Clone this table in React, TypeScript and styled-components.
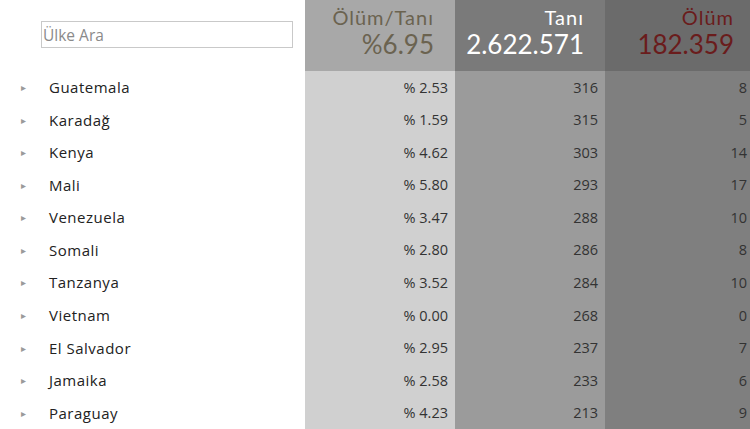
import styled, { createGlobalStyle } from 'styled-components';

const GlobalStyle = createGlobalStyle`
  html, body {
    margin: 0;
    padding: 0;
    background: #fff;
    overflow: hidden;
  }
  body {
    font-family: 'Open Sans', 'Liberation Sans', sans-serif;
  }
`;

type Tone = 'ratio' | 'cases' | 'deaths';

const headerBg: Record<Tone, string> = {
  ratio: '#a8a8a8',
  cases: '#7a7a7a',
  deaths: '#6b6b6b',
};

const bodyBg: Record<Tone, string> = {
  ratio: '#d0d0d0',
  cases: '#9b9b9b',
  deaths: '#7f7f7f',
};

const headerColor: Record<Tone, string> = {
  ratio: '#6b6350',
  cases: '#ffffff',
  deaths: '#6a1c1c',
};

const rows = [
  { name: 'Guatemala', ratio: '2.53', cases: 316, deaths: 8 },
  { name: 'Karadağ', ratio: '1.59', cases: 315, deaths: 5 },
  { name: 'Kenya', ratio: '4.62', cases: 303, deaths: 14 },
  { name: 'Mali', ratio: '5.80', cases: 293, deaths: 17 },
  { name: 'Venezuela', ratio: '3.47', cases: 288, deaths: 10 },
  { name: 'Somali', ratio: '2.80', cases: 286, deaths: 8 },
  { name: 'Tanzanya', ratio: '3.52', cases: 284, deaths: 10 },
  { name: 'Vietnam', ratio: '0.00', cases: 268, deaths: 0 },
  { name: 'El Salvador', ratio: '2.95', cases: 237, deaths: 7 },
  { name: 'Jamaika', ratio: '2.58', cases: 233, deaths: 6 },
  { name: 'Paraguay', ratio: '4.23', cases: 213, deaths: 9 },
];

export default function App() {
  return (
    <>
      <GlobalStyle />
      <Table>
        <HeaderRow>
          <SearchCell>
            <SearchInput placeholder="Ülke Ara" />
          </SearchCell>
          <HeadCell tone="ratio">
            <HeadLabel>Ölüm/Tanı</HeadLabel>
            <HeadValue>%6.95</HeadValue>
          </HeadCell>
          <HeadCell tone="cases">
            <HeadLabel>Tanı</HeadLabel>
            <HeadValue>2.622.571</HeadValue>
          </HeadCell>
          <HeadCell tone="deaths" $pad={16}>
            <HeadLabel>Ölüm</HeadLabel>
            <HeadValue>182.359</HeadValue>
          </HeadCell>
        </HeaderRow>
        {rows.map((r) => (
          <Row key={r.name}>
            <NameCell>
              <Caret>▸</Caret>
              <Country>{r.name}</Country>
            </NameCell>
            <NumCell tone="ratio">% {r.ratio}</NumCell>
            <NumCell tone="cases">{r.cases}</NumCell>
            <NumCell tone="deaths" $pad={3}>{r.deaths}</NumCell>
          </Row>
        ))}
      </Table>
    </>
  );
}

const Table = styled.div`
  width: 750px;
  height: 429px;
  display: flex;
  flex-direction: column;
`;

const HeaderRow = styled.div`
  display: grid;
  grid-template-columns: 305px 150px 150px 145px;
  height: 71px;
`;

const SearchCell = styled.div`
  display: flex;
  align-items: flex-start;
  padding: 21px 0 0 41px;
`;

const SearchInput = styled.input`
  box-sizing: border-box;
  width: 252px;
  height: 27px;
  border: 1px solid #c9c9c9;
  padding: 0 1px;
  font-family: 'Open Sans', 'Liberation Sans', sans-serif;
  font-size: 15.5px;
  color: #333;
  outline: none;

  &::placeholder {
    color: #8a8a8a;
  }
`;

const HeadCell = styled.div<{ tone: Tone; $pad?: number }>`
  background: ${(p) => headerBg[p.tone]};
  color: ${(p) => headerColor[p.tone]};
  font-family: Lato, 'Open Sans', sans-serif;
  display: flex;
  flex-direction: column;
  align-items: flex-end;
  padding: 5px ${(p) => p.$pad ?? 21}px 0 0;
`;

const HeadLabel = styled.div`
  font-size: 20px;
  line-height: 1.2;
  letter-spacing: 1px;
`;

const HeadValue = styled.div`
  font-size: 26px;
  line-height: 1.2;
`;

const Row = styled.div`
  display: grid;
  grid-template-columns: 305px 150px 150px 145px;
  height: 32.6px;
`;

const NameCell = styled.div`
  display: flex;
  align-items: center;
  padding-left: 21px;
`;

const Caret = styled.span`
  width: 28px;
  font-size: 10px;
  color: #9a9a9a;
`;

const Country = styled.span`
  font-size: 15px;
  color: #222;
  letter-spacing: 0.5px;
`;

const NumCell = styled.div<{ tone: Tone; $pad?: number }>`
  background: ${(p) => bodyBg[p.tone]};
  display: flex;
  align-items: center;
  justify-content: flex-end;
  padding-right: ${(p) => p.$pad ?? 7}px;
  font-size: 14.5px;
  color: #333;
`;
